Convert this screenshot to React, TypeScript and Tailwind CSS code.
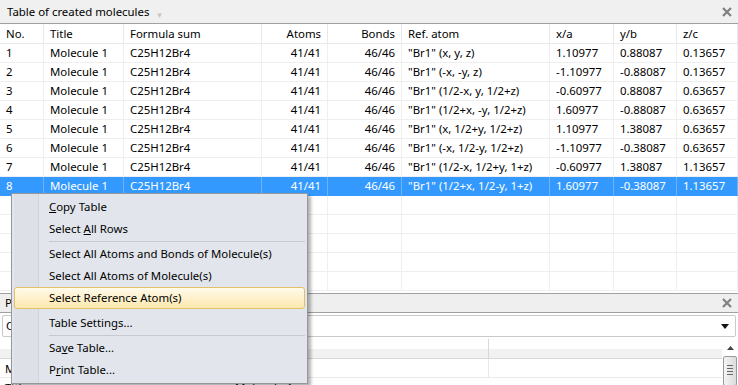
const cols = 'grid grid-cols-[44px_80px_138px_66px_74px_148px_64px_63px_61px]';

const rows = [
  ['1', '41/41', '46/46', '"Br1" (x, y, z)', '1.10977', '0.88087', '0.13657'],
  ['2', '41/41', '46/46', '"Br1" (-x, -y, z)', '-1.10977', '-0.88087', '0.13657'],
  ['3', '41/41', '46/46', '"Br1" (1/2-x, y, 1/2+z)', '-0.60977', '0.88087', '0.63657'],
  ['4', '41/41', '46/46', '"Br1" (1/2+x, -y, 1/2+z)', '1.60977', '-0.88087', '0.63657'],
  ['5', '41/41', '46/46', '"Br1" (x, 1/2+y, 1/2+z)', '1.10977', '1.38087', '0.63657'],
  ['6', '41/41', '46/46', '"Br1" (-x, 1/2-y, 1/2+z)', '-1.10977', '-0.38087', '0.63657'],
  ['7', '41/41', '46/46', '"Br1" (1/2-x, 1/2+y, 1+z)', '-0.60977', '1.38087', '1.13657'],
  ['8', '41/41', '46/46', '"Br1" (1/2+x, 1/2-y, 1+z)', '1.60977', '-0.38087', '1.13657'],
];

function CloseX() {
  return (
    <svg width="10" height="10" viewBox="0 0 10 10">
      <path d="M1 1 L9 9 M9 1 L1 9" stroke="#808080" strokeWidth="2.2" />
    </svg>
  );
}

function Cell({ children, right, sel }: { children?: React.ReactNode; right?: boolean; sel?: boolean }) {
  return (
    <div
      className={`h-[19px] border-r border-b px-[6px] leading-[18px] whitespace-nowrap overflow-hidden ${
        sel ? 'border-r-[#6fb3f7] border-b-[#3399ff] text-white' : 'border-[#efefef]'
      } ${right ? 'text-right' : ''}`}
    >
      {children}
    </div>
  );
}

function MenuItem({ children, hot }: { children: React.ReactNode; hot?: boolean }) {
  return (
    <div
      className={`h-[22px] flex items-center pl-[34px] mx-[2px] rounded-[3px] border ${
        hot ? 'border-[#e3c16a] bg-gradient-to-b from-[#fffaea] to-[#fde8ad]' : 'border-transparent'
      }`}
    >
      {children}
    </div>
  );
}

function Sep() {
  return (
    <div className="h-[3px] ml-[37px] mr-[2px] flex flex-col justify-center">
      <div className="h-px bg-[#c6c9ce]" />
    </div>
  );
}

export default function App() {
  return (
    <div className="relative w-[738px] h-[385px] overflow-hidden bg-white text-[11.4px] text-black font-['Noto_Sans',sans-serif]">
      {/* top panel */}
      <div className="h-[291px] overflow-hidden">
        <div className="h-[24px] bg-[#f0f0f0] border-b border-[#a0a0a0] flex items-center pl-[7px] pr-[6px]">
          <span>Table of created molecules</span>
          <span className="ml-[6px] mt-[6px] text-[8px] text-[#c8c8c8]">▼</span>
          <div className="ml-auto"><CloseX /></div>
        </div>
        <div className={cols}>
          {['No.', 'Title', 'Formula sum'].map((h) => (
            <div key={h} className="h-[20px] border-r border-b border-[#e8e8e8] px-[6px] leading-[19px]">{h}</div>
          ))}
          <div className="h-[20px] border-r border-b border-[#e8e8e8] px-[6px] leading-[19px] text-right">Atoms</div>
          <div className="h-[20px] border-r border-b border-[#e8e8e8] px-[6px] leading-[19px] text-right">Bonds</div>
          {['Ref. atom', 'x/a', 'y/b', 'z/c'].map((h) => (
            <div key={h} className="h-[20px] border-r border-b border-[#e8e8e8] px-[6px] leading-[19px]">{h}</div>
          ))}
          {rows.map((r) => {
            const sel = r[0] === '8';
            return (
              <div key={r[0]} className={`col-span-9 ${cols} ${sel ? 'bg-[#3399ff]' : ''}`}>
                <Cell sel={sel}>{r[0]}</Cell>
                <Cell sel={sel}>Molecule 1</Cell>
                <Cell sel={sel}>C25H12Br4</Cell>
                <Cell sel={sel} right>{r[1]}</Cell>
                <Cell sel={sel} right>{r[2]}</Cell>
                <Cell sel={sel}>{r[3]}</Cell>
                <Cell sel={sel}>{r[4]}</Cell>
                <Cell sel={sel}>{r[5]}</Cell>
                <Cell sel={sel}>{r[6]}</Cell>
              </div>
            );
          })}
          {[0, 1, 2, 3, 4].map((i) => (
            <div key={i} className={`col-span-9 ${cols}`}>
              {[0, 1, 2, 3, 4, 5, 6, 7, 8].map((j) => (
                <Cell key={j} />
              ))}
            </div>
          ))}
        </div>
      </div>

      {/* bottom panel */}
      <div className="mt-[2px] border-t border-[#a0a0a0]">
        <div className="h-[19px] bg-[#efefef] border-b border-[#a0a0a0] flex items-center pl-[5px] pr-[6px]">
          <span>Properties</span>
          <div className="ml-auto"><CloseX /></div>
        </div>
        <div className="mx-[2px] mt-[2px] h-[22px] border border-[#c9c9c9] rounded-[2px] bg-white flex items-center pl-[3px] pr-[6px]">
          <span>Crystal</span>
          <svg className="ml-auto" width="8" height="5" viewBox="0 0 8 5">
            <path d="M0 0 H8 L4 5 Z" fill="#111" />
          </svg>
        </div>
        <div className="mt-[2px] flex">
          <div className="flex-1">
            <div className="grid grid-cols-[230px_259px_1fr] h-[20px] bg-gradient-to-b from-white from-50% to-[#f1f1f1] to-50% border-b border-[#d8d8d8]">
              <div className="border-r border-[#e2e2e2]" />
              <div className="border-r border-[#d8d8d8]" />
              <div />
            </div>
            <div className="grid grid-cols-[230px_259px_1fr] h-[19px] border-b border-[#e9e9e9]">
              <div className="px-[5px] leading-[19px] border-r border-[#efefef]">Molecule</div>
              <div className="border-r border-[#e9e9e9]" />
              <div />
            </div>
            <div className="grid grid-cols-[230px_259px_1fr] h-[19px]">
              <div className="px-[5px] leading-[19px]">Title</div>
              <div className="px-[5px] leading-[19px]">Molecule 1</div>
              <div />
            </div>
          </div>
          <div className="w-[16px] flex flex-col items-center">
            <svg className="mt-[7px]" width="7" height="4" viewBox="0 0 7 4">
              <path d="M0 4 L3.5 0 L7 4 Z" fill="#444" />
            </svg>
            <div className="mt-[6px] w-[14px] h-[30px] border border-[#9a9a9a] rounded-[2px] bg-gradient-to-r from-[#f4f4f4] to-[#dcdcdc] flex flex-col items-center pt-[8px] gap-[2px]">
              <div className="w-[6px] h-px bg-[#666]" />
              <div className="w-[6px] h-px bg-[#666]" />
              <div className="w-[6px] h-px bg-[#666]" />
              <div className="w-[6px] h-px bg-[#666]" />
            </div>
          </div>
        </div>
      </div>

      {/* context menu */}
      <div className="absolute left-[11px] top-[193px] w-[297px] pt-[2px] pb-[2px] border border-[#979797] bg-[#e2e6ec] shadow-[3px_3px_3px_rgba(0,0,0,0.3)]">
        <div className="absolute left-[2px] top-0 bottom-0 w-[25px] bg-[#dde1e7] border-r border-[#d0d4da]" />
        <div className="relative">
          <MenuItem><span><u>C</u>opy Table</span></MenuItem>
          <MenuItem><span>Select <u>A</u>ll Rows</span></MenuItem>
          <Sep />
          <MenuItem>Select All Atoms and Bonds of Molecule(s)</MenuItem>
          <MenuItem>Select All Atoms of Molecule(s)</MenuItem>
          <MenuItem hot>Select Reference Atom(s)</MenuItem>
          <div className="h-[3px]" />
          <MenuItem>Table Settings...</MenuItem>
          <Sep />
          <MenuItem><span>Sa<u>v</u>e Table...</span></MenuItem>
          <MenuItem><span>P<u>r</u>int Table...</span></MenuItem>
        </div>
      </div>
    </div>
  );
}
